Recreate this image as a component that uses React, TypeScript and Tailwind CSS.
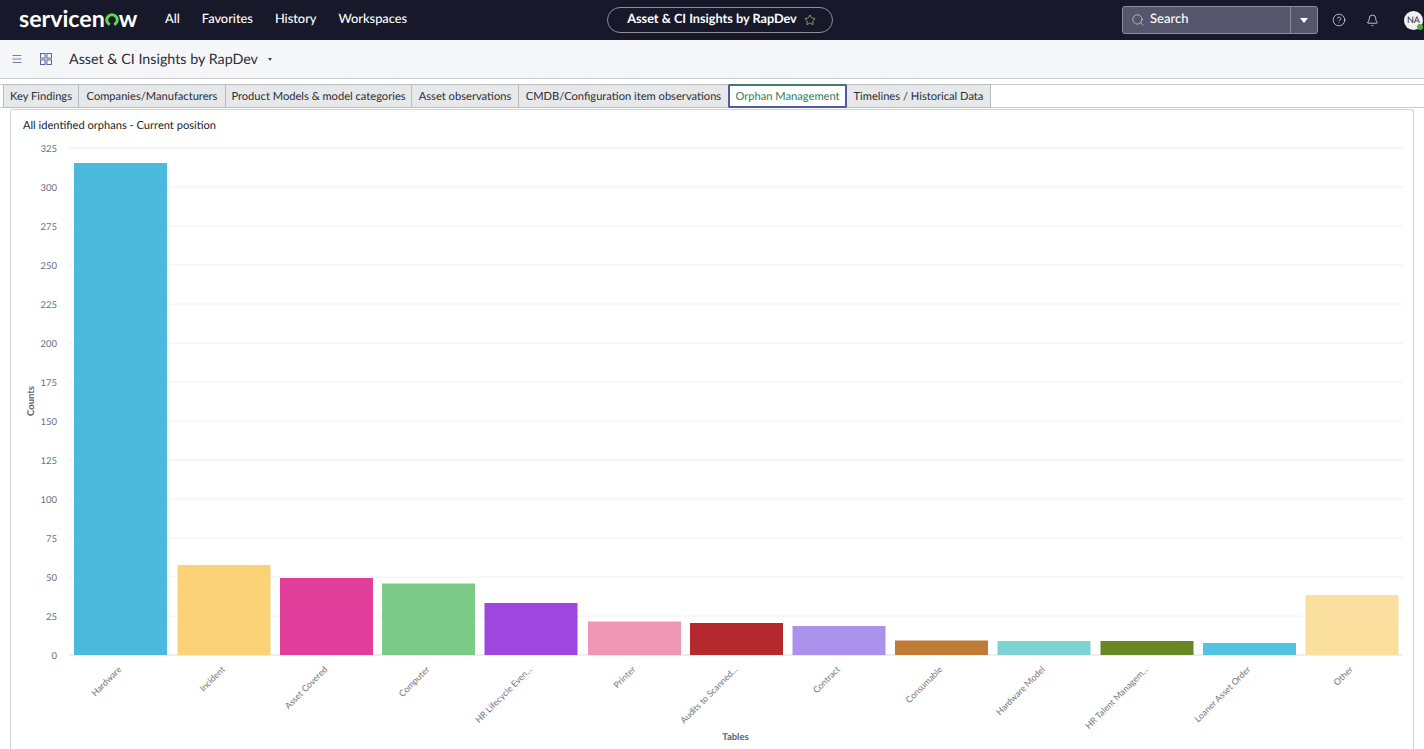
import { Search, CircleHelp, Bell, Star, Menu } from "lucide-react";

const tabs = [
  { label: "Key Findings", width: "w-[76px]" },
  { label: "Companies/Manufacturers", width: "w-[148px]" },
  { label: "Product Models & model categories", width: "w-[187px]" },
  { label: "Asset observations", width: "w-[108px]" },
  { label: "CMDB/Configuration item observations", width: "w-[211px]" },
  { label: "Orphan Management", width: "w-[119px]" },
  { label: "Timelines / Historical Data", width: "w-[145px]" },
];

const yTicks = [0, 25, 50, 75, 100, 125, 150, 175, 200, 225, 250, 275, 300, 325];

// x, top of bar, colour, label
const bars = [
  { x: 74, top: 163, color: "#4ab9dc", label: "Hardware" },
  { x: 177.5, top: 565, color: "#fbd277", label: "Incident" },
  { x: 280, top: 578, color: "#e13e9b", label: "Asset Covered" },
  { x: 382, top: 583.5, color: "#7ccb88", label: "Computer" },
  { x: 484.5, top: 603, color: "#a046e0", label: "HR Lifecycle Even..." },
  { x: 588, top: 621.5, color: "#ef97b4", label: "Printer" },
  { x: 690, top: 623, color: "#b5292e", label: "Audits to Scanned..." },
  { x: 792.5, top: 626, color: "#ac91ec", label: "Contract" },
  { x: 895, top: 640.5, color: "#c07c37", label: "Consumable" },
  { x: 997.5, top: 641, color: "#7dd3d3", label: "Hardware Model" },
  { x: 1100.5, top: 641, color: "#688823", label: "HR Talent Managem..." },
  { x: 1203, top: 643, color: "#52c4e0", label: "Loaner Asset Order" },
  { x: 1305.5, top: 595, color: "#fadf9f", label: "Other" },
];

function BarChart() {
  return (
    <svg viewBox="11 136 1402 613" className="block w-[1402px] h-[613px]" fontFamily="Lato, sans-serif">
      {yTicks.map((t) => {
        const y = 655 - t * 1.56;
        return (
          <g key={t}>
            <line x1="69" x2="1403" y1={y} y2={y} stroke={t === 0 ? "#d5dbe3" : "#eff0f2"} strokeWidth="1" />
            <text x="57" y={y + 3.5} textAnchor="end" fontSize="9.5" fill="#6e7078">
              {t}
            </text>
          </g>
        );
      })}
      {bars.map((b) => (
        <g key={b.label}>
          <rect x={b.x} y={b.top} width="93" height={655 - b.top} fill={b.color} />
          <text
            x={b.x + 48}
            y="670"
            textAnchor="end"
            fontSize="8.8"
            fill="#74767e"
            transform={`rotate(-45 ${b.x + 48} 670)`}
          >
            {b.label}
          </text>
        </g>
      ))}
      <text x="735.5" y="740" textAnchor="middle" fontSize="9.5" fontWeight="700" fill="#5f6272">
        Tables
      </text>
      <text
        x="34"
        y="401"
        textAnchor="middle"
        fontSize="9.5"
        fontWeight="700"
        fill="#5f6272"
        transform="rotate(-90 34 401)"
      >
        Counts
      </text>
    </svg>
  );
}

export default function App() {
  return (
    <div className="h-[749px] w-[1424px] overflow-hidden bg-white font-['Lato',sans-serif] text-[#20222c] [text-rendering:geometricPrecision]">
      <header className="flex h-10 items-center justify-between bg-[#171829] text-white">
        <div className="flex items-center pb-[2px]">
          <div className="ml-[19px] flex w-[119px] items-center text-[23.2px] font-bold leading-none">
            <span>servicen</span>
            <svg viewBox="0 0 16 16" className="mt-[2px] h-[14px] w-[14px]">
              <path d="M5.5 13.4a6 6 0 1 1 5 0" fill="none" stroke="#62d84e" strokeWidth="3.4" />
            </svg>
            <span>w</span>
          </div>
          <nav className="ml-[27px] flex gap-[22px] text-[12.8px] font-medium">
            <span>All</span>
            <span>Favorites</span>
            <span>History</span>
            <span>Workspaces</span>
          </nav>
        </div>
        <div className="absolute left-[607px] flex h-[26px] w-[226px] items-center justify-center gap-[7px] rounded-full border border-[#8d8e98] pl-[3px] text-[12.7px] font-bold">
          <span className="pb-[2px]">Asset &amp; CI Insights by RapDev</span>
          <Star size={12} strokeWidth={1.2} className="text-[#e9dca6]" />
        </div>
        <div className="mr-px flex items-center">
          <div className="flex h-[28px] w-[196px] items-center rounded-[3px] border border-[#8d8e9c] bg-[#55566c]">
            <div className="flex flex-1 items-center gap-[5px] pl-2 text-[13px] font-medium">
              <Search size={14} strokeWidth={1.2} className="text-[#d7d8de]" />
              <span className="pb-[2px]">Search</span>
            </div>
            <div className="flex h-full w-[27px] items-center justify-center border-l border-[#8d8e9c]">
              <div className="h-0 w-0 border-x-[4.5px] border-t-[5px] border-x-transparent border-t-white" />
            </div>
          </div>
          <CircleHelp size={14} strokeWidth={1.2} className="ml-[14px] text-[#f0f0f3]" />
          <Bell size={13} strokeWidth={1.4} className="ml-[20px] text-[#f0f0f3]" />
          <div className="relative ml-[25px] flex h-[19px] w-[19px] items-center justify-center rounded-full bg-[#f2f2f4] text-[9px] font-medium text-[#333645]">
            NA
            <span className="absolute bottom-0 right-0 h-[6px] w-[6px] rounded-full bg-[#52ad48]" />
          </div>
        </div>
      </header>

      <div className="flex h-[39px] items-center border-b border-[#c9cbcf] bg-[#f5f6f8]">
        <Menu size={12} strokeWidth={1.5} className="ml-[11px] text-[#4a5590]" />
        <svg viewBox="0 0 12 12" className="ml-[17px] h-3 w-3" fill="none" stroke="#4a5590" strokeWidth="0.9">
          <rect x="0.5" y="0.5" width="4.6" height="4.6" />
          <rect x="6.9" y="0.5" width="4.6" height="4.6" />
          <rect x="0.5" y="6.9" width="4.6" height="4.6" />
          <rect x="6.9" y="6.9" width="4.6" height="4.6" />
        </svg>
        <span className="ml-[17px] pt-px text-[14.3px] text-[#2b2e3a]">Asset &amp; CI Insights by RapDev</span>
        <div className="ml-[10px] h-0 w-0 border-x-[2.5px] border-t-[3px] border-x-transparent border-t-[#3d4470]" />
      </div>

      <div className="mt-[5px] h-[24px] border-y border-[#c9cbcf]">
        <div className="ml-[3px] flex h-full">
          {tabs.map((t) =>
            t.label === "Orphan Management" ? (
              <div
                key={t.label}
                className={`${t.width} relative z-10 -my-px -mr-px flex h-[24px] items-center justify-center whitespace-nowrap rounded-[2px] border-2 border-[#4d5aa5] border-t-[#3f8062] bg-white pt-[2px] text-[11.15px] text-[#2f7d5c]`}
              >
                {t.label}
              </div>
            ) : (
              <div
                key={t.label}
                className={`${t.width} -my-px -mr-px flex items-center justify-center whitespace-nowrap border border-[#b9bcc1] bg-[#e6e8ea] pt-[2px] text-[11.15px] text-[#2a2c36]`}
              >
                {t.label}
              </div>
            ),
          )}
        </div>
      </div>

      <div className="mx-[10px] mt-px rounded-t-[3px] border border-b-0 border-[#d3d4d8]">
        <div className="h-[26px] pl-3 pt-[9px] text-[11.1px] leading-[13px] text-[#20222c]">
          All identified orphans - Current position
        </div>
        <BarChart />
      </div>
    </div>
  );
}
